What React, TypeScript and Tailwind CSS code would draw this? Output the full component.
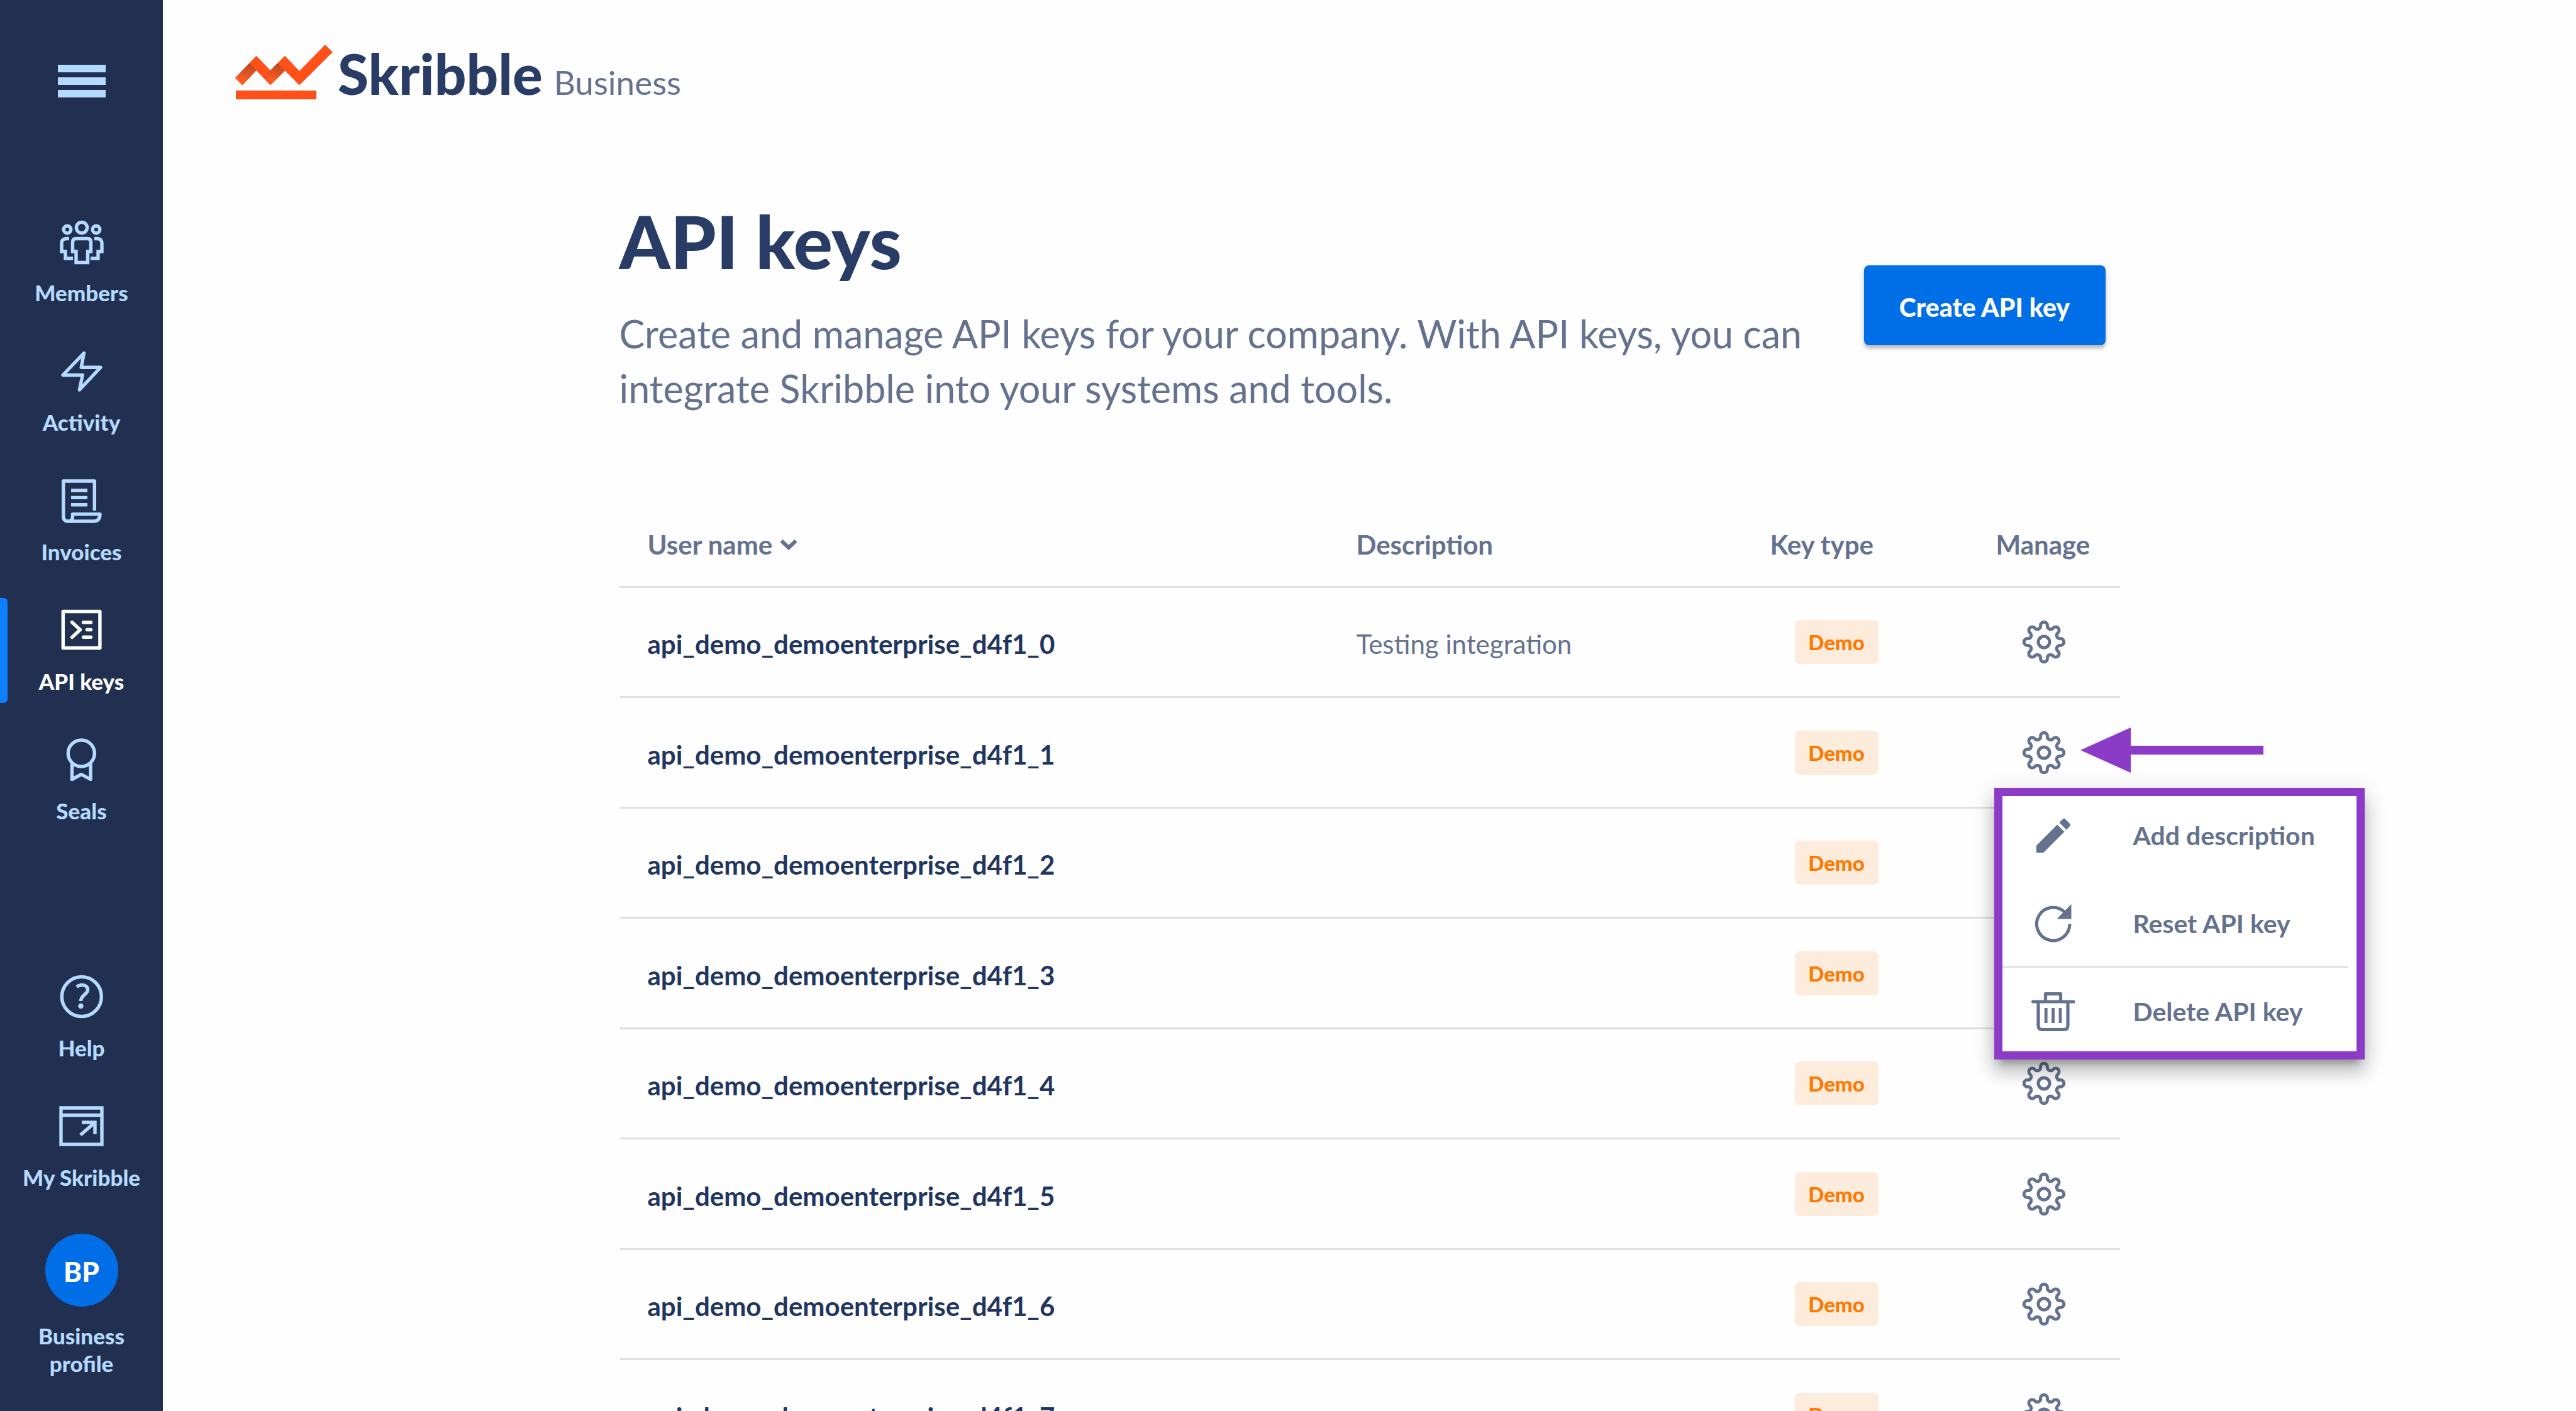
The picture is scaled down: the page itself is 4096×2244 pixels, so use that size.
import type { ReactNode } from "react";

type NavItem = { label: string; icon: ReactNode; active?: boolean };

function NavSvg({ children }: { children: ReactNode }) {
  return (
    <svg
      className="size-[72px] overflow-visible"
      viewBox="-1 -1 72 72"
      fill="none"
      stroke="currentColor"
      strokeWidth="5.4"
      strokeLinejoin="round"
      aria-hidden="true"
    >
      {children}
    </svg>
  );
}

const MembersIcon = () => (
  <NavSvg>
    <circle cx="35" cy="12" r="8.6" />
    <circle cx="12" cy="15" r="5.8" />
    <circle cx="58" cy="15" r="5.8" />
    <path d="M20.500 50V35q0-5.500 5.500-5.500h18q5.500 0 5.500 5.500V50H44.500V67.500H26V50z" strokeLinejoin="miter" />
    <path d="M15 29.500H10Q3 30 3 37V50H9V61H21" strokeLinejoin="miter" />
    <path d="M55 29.500H60Q67 30 67 37V50H61V61H49" strokeLinejoin="miter" />
  </NavSvg>
);

const ActivityIcon = () => (
  <NavSvg>
    <path d="M38.500 5.500L5 40.500H36.300L31.400 64L65 28.200H34.200z" />
  </NavSvg>
);

const InvoicesIcon = () => (
  <NavSvg>
    <path d="M55.300 50V3H5.800V59Q5.800 67 13.500 67H54Q64 67 64 55.600H20.500V60Q20.500 67 13.500 67" />
    <path d="M18 18H44M18 29.400H44M18 40.800H44" />
  </NavSvg>
);

const ApiIcon = () => (
  <NavSvg>
    <rect x="5.300" y="4.500" width="58.600" height="58" />
    <path d="M19.500 21.500L32.500 33.500L19.500 45.500" strokeLinecap="round" />
    <path d="M37.500 21.800H49.500M43.500 33.500H49.500M37.500 45.200H49.500" strokeLinecap="round" />
  </NavSvg>
);

const SealsIcon = () => (
  <NavSvg>
    <circle cx="34.300" cy="24" r="21" />
    <path d="M19.500 40V65.500L34.300 57.500L49 65.500V40" />
  </NavSvg>
);

const HelpIcon = () => (
  <NavSvg>
    <circle cx="34.800" cy="34" r="31.500" />
    <path d="M27 18.500Q31 15.500 35.500 15.500C41 15.500 44.500 18.500 44.500 23C44.500 30.500 33.500 31.500 33.500 41" />
    <circle cx="33.500" cy="49" r="4.200" fill="currentColor" stroke="none" />
  </NavSvg>
);

const WindowIcon = () => (
  <NavSvg>
    <path d="M2 5H67V63H2zM2 16.500H67" strokeLinejoin="miter" />
    <path d="M33 48L55 29M35 28H56V46.500" strokeLinejoin="miter" />
  </NavSvg>
);

const GEAR_PATH = (() => {
  const c = 36;
  const at = (angle: number, along: number, across: number) => {
    const x = c + along * Math.cos(angle) - across * Math.sin(angle);
    const y = c + along * Math.sin(angle) + across * Math.cos(angle);
    return `${x.toFixed(2)} ${y.toFixed(2)}`;
  };
  let d = "";
  for (let i = 0; i < 8; i++) {
    const a = (i * Math.PI) / 4;
    d += `${i === 0 ? "M" : "A5.200 5.200 0 0 0 "}${at(a, 24.8, -5.4)}`;
    d += `L${at(a, 26.4, -5.4)}A5.400 5.400 0 0 1 ${at(a, 26.4, 5.4)}L${at(a, 24.8, 5.4)}`;
  }
  return `${d}A5.200 5.200 0 0 0 ${at(0, 24.8, -5.4)}Z`;
})();

const GearIcon = () => (
  <svg className="size-[72px]" viewBox="0 0 72 72" fill="none" stroke="currentColor" strokeWidth="5" strokeLinejoin="round" aria-hidden="true">
    <path d={GEAR_PATH} />
    <circle cx="36" cy="36" r="9" />
  </svg>
);

const PencilIcon = () => (
  <svg className="size-[72px]" viewBox="0 0 24 24" fill="currentColor" aria-hidden="true">
    <path d="M3 17.250V21h3.750L17.810 9.940l-3.750-3.750L3 17.250zM20.710 7.040a1 1 0 0 0 0-1.410l-2.340-2.340a1 1 0 0 0-1.410 0l-1.830 1.830 3.750 3.750 1.830-1.830z" />
  </svg>
);

const ResetIcon = () => (
  <svg className="size-[72px]" viewBox="-7 -5 72 72" fill="none" stroke="currentColor" strokeWidth="5" aria-hidden="true">
    <path d="M55 31.600A26.300 26.300 0 1 1 48 13.600" />
    <path d="M57.500 0V23.500H34.500z" fill="currentColor" stroke="none" />
  </svg>
);

const TrashIcon = () => (
  <svg className="size-[72px]" viewBox="-1 -5 72 72" fill="none" stroke="currentColor" strokeWidth="5.200" strokeLinejoin="round" aria-hidden="true">
    <path d="M2.600 15H67M22.500 15V2.600H46.500V15" strokeLinecap="round" />
    <path d="M11 15V53Q11 59.500 17.500 59.500H51.500Q58 59.500 58 53V15" />
    <path d="M23.200 25V49M34.600 25V49M46 25V49" strokeWidth="4.800" />
  </svg>
);

const LogoMark = () => (
  <svg className="h-[87px] w-[155px]" viewBox="0 0 155 87" aria-hidden="true">
    <defs>
      <linearGradient id="fold-a" gradientUnits="userSpaceOnUse" x1="25" y1="28" x2="18" y2="58">
        <stop offset="0" stopColor="#b8451f" />
        <stop offset="1" stopColor="#ff5a26" />
      </linearGradient>
      <linearGradient id="fold-b" gradientUnits="userSpaceOnUse" x1="70" y1="28" x2="63" y2="58">
        <stop offset="0" stopColor="#b8451f" />
        <stop offset="1" stopColor="#ff5a26" />
      </linearGradient>
    </defs>
    <path d="M0 53L33.500 17.700L56 41L79 17.700L102 42L143 0L155 12L102 64.500L79 41.500L56 64.500L33.500 41L11.500 64.500z" fill="#ff5019" />
    <path d="M0 53L22.500 29.300L33.500 41L11.500 64.500z" fill="url(#fold-a)" />
    <path d="M47 50L67.500 29.300L79 41.500L58.500 62z" fill="url(#fold-b)" />
    <rect x="1" y="73" width="128" height="14" fill="#ff5019" />
  </svg>
);

const mainNav: NavItem[] = [
  { label: "Members", icon: <MembersIcon /> },
  { label: "Activity", icon: <ActivityIcon /> },
  { label: "Invoices", icon: <InvoicesIcon /> },
  { label: "API keys", icon: <ApiIcon />, active: true },
  { label: "Seals", icon: <SealsIcon /> },
];

const footNav: NavItem[] = [
  { label: "Help", icon: <HelpIcon /> },
  { label: "My Skribble", icon: <WindowIcon /> },
];

function NavLink({ label, icon, active }: NavItem) {
  return (
    <a
      href="#"
      aria-current={active ? "page" : undefined}
      className={`relative flex h-[206px] flex-col items-center gap-[22px] pt-9 ${active ? "text-white" : "text-[#b5daff]"}`}
    >
      {active && <span className="absolute left-0 top-5 h-[167px] w-3 rounded-r-md bg-[#0d80ff]" />}
      {icon}
      <span className="whitespace-nowrap text-[35px] leading-[44px] font-black">{label}</span>
    </a>
  );
}

function Sidebar() {
  return (
    <aside className="flex w-[259px] shrink-0 flex-col bg-[#213050]">
      <button type="button" aria-label="Toggle menu" className="mt-[103px] flex w-[76px] flex-col gap-2 self-center">
        <span className="h-3 w-full bg-[#b5daff]" />
        <span className="h-3 w-full bg-[#b5daff]" />
        <span className="h-3 w-full bg-[#b5daff]" />
      </button>
      <nav aria-label="Main" className="mt-[158px] flex flex-col">
        {mainNav.map((item) => (
          <NavLink key={item.label} {...item} />
        ))}
      </nav>
      <nav aria-label="Account" className="mt-auto flex flex-col">
        {footNav.map((item) => (
          <NavLink key={item.label} {...item} />
        ))}
        <a href="#" className="flex flex-col items-center gap-6 pt-9 pb-[54px] text-center text-[#b5daff]">
          <span className="flex size-[116px] items-center justify-center rounded-full bg-[#006ee6] pt-1 text-[44px] leading-[48px] font-black text-white">
            BP
          </span>
          <span className="w-[160px] text-[35px] leading-[44px] font-black">Business profile</span>
        </a>
      </nav>
    </aside>
  );
}

const menuItems = [
  { label: "Add description", icon: <PencilIcon /> },
  { label: "Reset API key", icon: <ResetIcon />, divider: true },
  { label: "Delete API key", icon: <TrashIcon /> },
];

function ManageMenu() {
  return (
    <div
      role="menu"
      className="absolute left-[42px] top-[143px] z-10 w-[589px] rounded-md bg-white py-[6px] shadow-[0_13px_13px_-8px_rgba(0,0,0,0.3),0_21px_26px_3px_rgba(0,0,0,0.14),0_8px_36px_5px_rgba(0,0,0,0.12)]"
    >
      {menuItems.map(({ label, icon, divider }) => (
        <div key={label} role="none" className="relative">
          <button
            type="button"
            role="menuitem"
            className="flex h-[140px] w-full items-center gap-[91px] whitespace-nowrap pl-[58px] text-[41px] leading-[48px] font-bold"
          >
            {icon}
            {label}
          </button>
          {divider && <hr className="absolute bottom-0 left-[13px] right-[26px] border-t-[3px] border-[#e0e0e0]" />}
        </div>
      ))}
      <div className="pointer-events-none absolute inset-0 border-[13px] border-[#8c3bc7]" />
    </div>
  );
}

function Pointer() {
  return (
    <svg className="absolute left-[179px] top-[47px] z-10 h-[72px] w-[291px]" viewBox="0 0 291 72" fill="#8c3bc7" aria-hidden="true">
      <path d="M0 36L80 0V29H291V43H80V72z" />
    </svg>
  );
}

const rows = [0, 1, 2, 3, 4, 5, 6, 7].map((n) => ({
  name: `api_demo_demoenterprise_d4f1_${n}`,
  description: n === 0 ? "Testing integration" : "",
  type: "Demo",
  open: n === 1,
}));

function KeysTable() {
  return (
    <table className="mt-[130px] w-full table-fixed border-separate border-spacing-0 text-left text-[#64718f]">
      <colgroup>
        <col />
        <col className="w-[658px]" />
        <col className="w-[359px]" />
        <col className="w-[242px]" />
      </colgroup>
      <thead>
        <tr className="h-[142px] text-[42px] leading-[48px] [&>th]:border-b-[3px] [&>th]:border-[#e0e0e0] [&>th]:pt-[6px] [&>th]:pl-[45px] [&>th]:font-bold">
          <th scope="col" aria-sort="descending">
            <button type="button" className="flex items-center gap-3">
              User name
              <svg className="h-[18px] w-[28px]" viewBox="0 0 28 18" fill="none" stroke="currentColor" strokeWidth="6" aria-hidden="true">
                <path d="M2.500 3L14 14L25.500 3" />
              </svg>
            </button>
          </th>
          <th scope="col">Description</th>
          <th scope="col">Key type</th>
          <th scope="col">Manage</th>
        </tr>
      </thead>
      <tbody>
        {rows.map((row) => (
          <tr
            key={row.name}
            className="odd:h-[175px] even:h-[176px] [&>*]:border-b-[3px] [&>*]:border-[#e0e0e0]"
          >
            <th scope="row" className="pt-[6px] pl-[45px] text-[42px] leading-[48px] font-bold text-[#203560]">
              {row.name}
            </th>
            <td className="pt-[6px] pl-[45px] text-[42px] leading-[48px]">{row.description}</td>
            <td className="pl-[84px]">
              <span className="flex h-[70px] w-[133px] items-center justify-center rounded-lg bg-[#fdebdb] text-[33px] leading-[40px] font-black text-[#ff7800]">
                {row.type}
              </span>
            </td>
            <td className="relative">
              <button type="button" aria-label={`Manage ${row.name}`} className="mx-auto block">
                <GearIcon />
              </button>
              {row.open && <Pointer />}
              {row.open && <ManageMenu />}
            </td>
          </tr>
        ))}
      </tbody>
    </table>
  );
}

export default function App() {
  return (
    <div className="flex h-screen overflow-hidden bg-[#fefefe] font-['Lato',sans-serif]">
      <Sidebar />
      <div className="min-w-0 flex-1">
        <header className="flex h-[159px] items-start gap-2 pl-[115px] pt-[71px]">
          <LogoMark />
          <div className="mt-1 flex items-baseline gap-[18px]">
            <span className="text-[89px] leading-[84px] font-black text-[#283c66]">Skribble</span>
            <span className="text-[53px] leading-[60px] text-[#64718f]">Business</span>
          </div>
        </header>
        <main className="mx-auto mt-[155px] w-full max-w-[2386px]">
          <div className="flex items-start justify-between pr-[23px]">
            <div className="text-[#64718f]">
              <h1 className="text-[116px] leading-[140px] font-black text-[#283c66]">API keys</h1>
              <p className="mt-[33px] max-w-[1930px] pb-[2px] text-[61px] leading-[87px]">
                Create and manage API keys for your company. With API keys, you can integrate Skribble into your systems and tools.
              </p>
            </div>
            <button
              type="button"
              className="mt-[108px] h-[127px] w-[384px] shrink-0 rounded-lg bg-[#006ee6] pt-[6px] text-[41px] leading-[48px] font-black text-white shadow-[0_5px_5px_rgba(0,0,0,0.2),0_3px_12px_rgba(0,0,0,0.12)]"
            >
              Create API key
            </button>
          </div>
          <KeysTable />
        </main>
      </div>
    </div>
  );
}
